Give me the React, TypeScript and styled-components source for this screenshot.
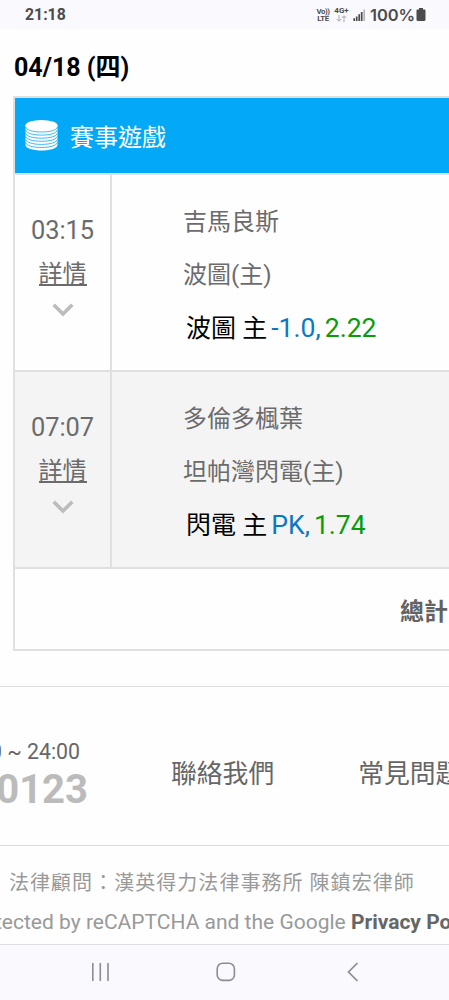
import React from 'react';
import styled, { createGlobalStyle } from 'styled-components';

const GlobalStyle = createGlobalStyle`
  * { box-sizing: border-box; }
  body { margin: 0; background: #fff; }
  body, p, h1 { font-family: Roboto, "Noto Sans CJK TC", sans-serif; }
  p, h1 { margin: 0; white-space: nowrap; }
`;

const Screen = styled.div`
  width: 449px;
  height: 1000px;
  display: flex;
  flex-direction: column;
  overflow: hidden;
  background: #fefefe;
`;

const StatusBar = styled.header`
  height: 29px;
  flex: none;
  display: flex;
  justify-content: space-between;
  padding: 0 23px 0 25px;
  background: #f9f9fe;
  color: #4b4b4b;
`;

const Clock = styled.p`
  font: 700 15.8px/30px Roboto, sans-serif;
`;

const StatusIcons = styled.div`
  display: flex;
  align-items: center;
`;

const Battery = styled.p`
  font: 600 16.5px/30px Inter, sans-serif;
  width: 46px;
  letter-spacing: -0.1px;
`;

const DateTitle = styled.h1`
  flex: none;
  height: 67px;
  padding: 23px 0 0 14px;
  font-size: 25px;
  font-weight: 700;
  line-height: 32px;
  color: #000;
`;

const Panel = styled.section`
  flex: none;
  width: 436px;
  height: 555px;
  margin-left: 13px;
  border: 2px solid #e0e0e0;
  border-right: 0;
  overflow: hidden;
`;

const PanelHead = styled.div`
  display: flex;
  align-items: center;
  gap: 12px;
  height: 75px;
  padding: 0 0 0 10px;
  background: #03a9f6;
  color: #fff;
`;

const PanelTitle = styled.p`
  font-size: 24px;
  line-height: 34px;
  padding-top: 4px;
`;

const BetRow = styled.div<{ $shade?: boolean }>`
  display: flex;
  height: 197px;
  border-top: 2px solid #e0e0e0;
  background: ${(p) => (p.$shade ? '#f4f4f4' : '#fefefe')};
  color: #6b6b6b;
`;

const TimeCell = styled.div`
  width: 97px;
  flex: none;
  display: flex;
  flex-direction: column;
  align-items: center;
  padding-top: 39px;
  border-right: 2px solid #e0e0e0;
`;

const Time = styled.p`
  font-size: 25.4px;
  line-height: 32px;
`;

const DetailLink = styled.p`
  margin: 13px 0 17px;
  height: 27px;
  font-size: 24px;
  line-height: 30px;
  border-bottom: 2px solid #6b6b6b;
`;

const Match = styled.div`
  padding: 31px 0 0 71px;
`;

const Team = styled.p`
  height: 53px;
  font-size: 24px;
  line-height: 32px;
`;

const Pick = styled.p`
  margin-top: -1px;
  padding-left: 3px;
  font-size: 26.6px;
  line-height: 34px;
  color: #000;
`;

const PickName = styled.span`
  font-size: 25px;
`;

const Line = styled.span`
  margin-left: 4px;
  color: #0b79c2;
`;

const Odds = styled.span`
  margin-left: 4px;
  color: #089c08;
`;

const Total = styled.div`
  height: 83px;
  padding: 26px 0 0 385px;
  border-top: 2px solid #e0e0e0;
  background: #fefefe;
  color: #626262;
  p { font-size: 24px; font-weight: 700; line-height: 34px; }
`;

const Contact = styled.footer`
  flex: none;
  display: flex;
  height: 160px;
  margin-top: 35px;
  border-top: 1px solid #e0e0e0;
  border-bottom: 1px solid #dadada;
  color: #666;
`;

const Hotline = styled.div`
  width: 88px;
  flex: none;
  display: flex;
  flex-direction: column;
  align-items: flex-end;
  padding-top: 50px;
  overflow: hidden;
`;

const Hours = styled.p`
  font-size: 21.3px;
  line-height: 30px;
  padding-right: 8px;
`;

const Phone = styled.p`
  margin-top: 1px;
  font-size: 40px;
  font-weight: 700;
  line-height: 44px;
  color: #bbb;
`;

const FooterLink = styled.p<{ $gap: number }>`
  margin-left: ${(p) => p.$gap}px;
  padding-top: 69px;
  font-size: 25.8px;
  line-height: 36px;
`;

const Legal = styled.div`
  flex: 1;
  overflow: hidden;
  padding-top: 21px;
  color: #999;
`;

const Counsel = styled.p`
  padding-left: 9px;
  font-size: 20px;
  letter-spacing: 1.04px;
  line-height: 32px;
`;

const Recaptcha = styled.p`
  margin: 8px 0 0 -5px;
  font-size: 21px;
  line-height: 30px;
  strong { color: #666; }
`;

const NavBar = styled.nav`
  height: 56px;
  flex: none;
  border-top: 1px solid #dddde6;
  background: #f9f9fe;
  display: flex;
  justify-content: space-between;
  align-items: center;
  padding: 0 90px 1px 90px;
`;

const HomeIcon = styled.svg`
  margin-right: 3px;
`;

const Coins = () => (
  <svg width="33" height="33" viewBox="0 0 33 33">
    <path d="M.5 6v20c0 3 7 5.500 16 5.500s16-2.500 16-5.500V6z" fill="#fff" />
    <ellipse cx="16.500" cy="6.500" rx="16" ry="5.500" fill="#fff" />
    {[8, 11.1, 14.2, 17.3, 20.4, 23.5].map((y) => (
      <path key={y} d={`M.5 ${y}c1 3 7 5 16 5s15-2 16-5`} fill="none" stroke="#03a9f6" strokeWidth=".8" />
    ))}
  </svg>
);

const Chevron = () => (
  <svg width="22" height="14" viewBox="0 0 22 14">
    <path d="M1.700 1.800 11 11l9.300-9.200" fill="none" stroke="#bcbcbc" strokeWidth="3.600" />
  </svg>
);

const VoLte = styled.div`
  width: 14px;
  margin-right: 4px;
  font: 700 7.8px/7px Roboto, sans-serif;
  white-space: nowrap;
  letter-spacing: -0.4px;
  text-align: center;
`;

const Network = styled.div`
  width: 15px;
  margin-right: 4px;
  display: flex;
  flex-direction: column;
  align-items: center;
  font: 700 8px/8px Roboto, sans-serif;
`;

const SignalBars = styled.svg`
  margin-right: 4px;
`;

const Signal = () => (
  <SignalBars width="13" height="12" viewBox="0 0 13 12">
    <path d="M1.200 12V9.200M3.700 12V7.500M6.200 12V5.200M8.700 12V3" stroke="#4b4b4b" strokeWidth="1.700" />
    <path d="M11.200 12V.5" stroke="#b5b5b8" strokeWidth="1.700" />
  </SignalBars>
);

interface Bet {
  time: string;
  away: string;
  home: string;
  pick: string;
  line: string;
  odds: string;
}

const bets: Bet[] = [
  { time: '03:15', away: '吉馬良斯', home: '波圖(主)', pick: '波圖 主', line: '-1.0,', odds: '2.22' },
  { time: '07:07', away: '多倫多楓葉', home: '坦帕灣閃電(主)', pick: '閃電 主', line: 'PK,', odds: '1.74' },
];

export default function App() {
  return (
    <Screen>
      <GlobalStyle />
      <StatusBar>
        <Clock>21:18</Clock>
        <StatusIcons>
          <VoLte>Vo))<br />LTE</VoLte>
          <Network>
            4G+
            <svg width="11" height="7" viewBox="0 0 11 7" fill="none" stroke="#aaa" strokeWidth="1">
              <path d="M3 0v6M.8 4 3 6.300 5.200 4M8 7V1M5.800 3 8 .7 10.200 3" />
            </svg>
          </Network>
          <Signal />
          <Battery>100%</Battery>
          <svg width="10" height="13" viewBox="0 0 10 13" fill="#4b4b4b">
            <path d="M3 0h4v1.500h1.500Q9.500 1.500 9.500 2.500v9q0 1.500-1.500 1.500H2Q.5 13 .5 11.500v-9q0-1 1-1H3z" />
          </svg>
        </StatusIcons>
      </StatusBar>
      <DateTitle>04/18 (四)</DateTitle>
      <Panel>
        <PanelHead>
          <Coins />
          <PanelTitle>賽事遊戲</PanelTitle>
        </PanelHead>
        {bets.map((b, i) => (
          <BetRow key={b.time} $shade={i % 2 === 1}>
            <TimeCell>
              <Time>{b.time}</Time>
              <DetailLink>詳情</DetailLink>
              <Chevron />
            </TimeCell>
            <Match>
              <Team>{b.away}</Team>
              <Team>{b.home}</Team>
              <Pick>
                <PickName>{b.pick}</PickName>
                <Line>{b.line}</Line>
                <Odds>{b.odds}</Odds>
              </Pick>
            </Match>
          </BetRow>
        ))}
        <Total>
          <p>總計</p>
        </Total>
      </Panel>
      <Contact>
        <Hotline>
          <Hours>0 ~ 24:00</Hours>
          <Phone>0123</Phone>
        </Hotline>
        <FooterLink $gap={83}>聯絡我們</FooterLink>
        <FooterLink $gap={84}>常見問題</FooterLink>
      </Contact>
      <Legal>
        <Counsel>法律顧問：漢英得力法律事務所 陳鎮宏律師</Counsel>
        <Recaptcha>
          tected by reCAPTCHA and the Google <strong>Privacy Policy</strong>
        </Recaptcha>
      </Legal>
      <NavBar>
        <svg width="20" height="20" viewBox="0 0 20 20" stroke="#8d8d90" strokeWidth="1.600">
          <path d="M2.800 1v18M10.300 1v18M18 1v18" />
        </svg>
        <HomeIcon width="20" height="20" viewBox="0 0 20 20" fill="none" stroke="#8d8d90" strokeWidth="1.600">
          <rect x="1.200" y="1.200" width="17.200" height="17.200" rx="5.500" />
        </HomeIcon>
        <svg width="14" height="20" viewBox="0 0 14 20" fill="none" stroke="#8d8d90" strokeWidth="1.700">
          <path d="M12.500 1 3.500 10l9 9" />
        </svg>
      </NavBar>
    </Screen>
  );
}
